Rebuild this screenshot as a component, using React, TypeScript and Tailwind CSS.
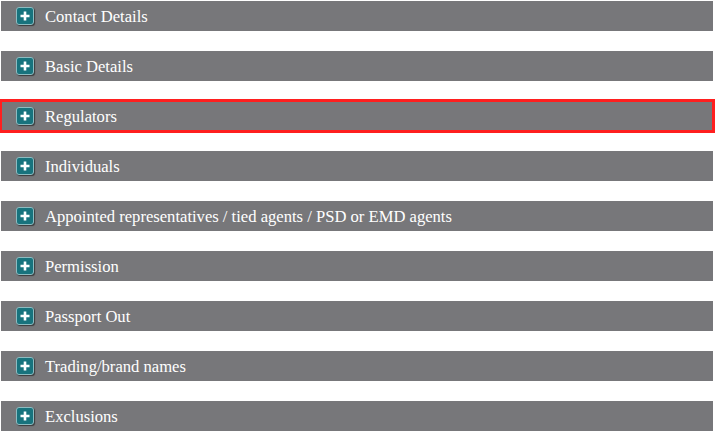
const sections = [
  "Contact Details",
  "Basic Details",
  "Regulators",
  "Individuals",
  "Appointed representatives / tied agents / PSD or EMD agents",
  "Permission",
  "Passport Out",
  "Trading/brand names",
  "Exclusions",
];

function PlusIcon() {
  return (
    <span className="flex h-[18px] w-[18px] shrink-0 items-center justify-center rounded-[3px] border border-[#8dbcc1] bg-[#18737d] shadow-[1px_1px_1px_rgba(0,0,0,0.5)]">
      <svg width="10" height="10" viewBox="0 0 10 10">
        <path d="M5 0.5v9M0.5 5h9" stroke="#fff" strokeWidth="2.6" />
      </svg>
    </span>
  );
}

export default function App() {
  return (
    <div className="flex min-h-[432px] w-[715px] flex-col gap-5 bg-white px-px pt-px font-['Liberation_Serif',serif]">
      {sections.map((title) => (
        <div
          key={title}
          className={
            title === "Regulators"
              ? "flex h-[30px] w-[712px] items-center bg-[#77777a] pl-[15px] shadow-[0_0_0_2px_#ff1f1f,inset_0_0_0_1px_#ff1f1f]"
              : "flex h-[30px] w-[712px] items-center bg-[#77777a] pl-[15px]"
          }
        >
          <PlusIcon />
          <span className="ml-[11px] pt-[3px] text-[16.6px] leading-none text-white">{title}</span>
        </div>
      ))}
    </div>
  );
}
